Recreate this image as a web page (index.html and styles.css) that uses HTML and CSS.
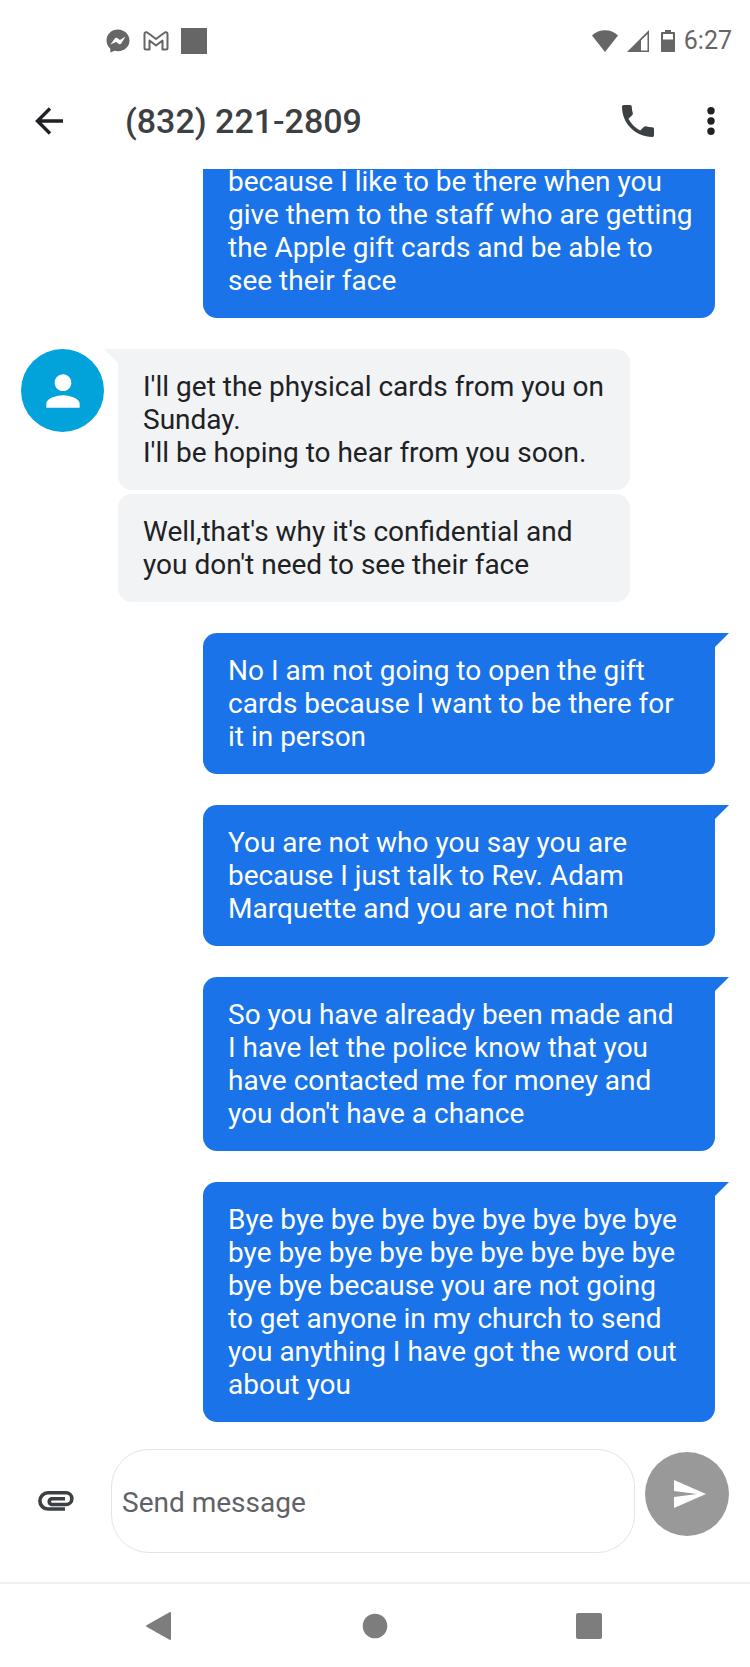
FILE: index.html
```
<!DOCTYPE html>
<html lang="en">
<head>
    <meta charset="UTF-8">
    <meta name="viewport" content="width=device-width, initial-scale=1">
    <title>Messages</title>
    <link rel="stylesheet" href="styles.css">
</head>
<body>
    <div class="status-bar">
        <div class="notifications">
            <svg width="24" height="24" viewBox="0 0 24 24">
                <path fill="#666" d="M12 0.5C5.500.5.500 5.300.500 11.500c0 3.300 1.500 6.100 3.700 8.100L4.500 23.500l4-1.800c1.100.3 2.300.5 3.500.5 6.500 0 11.500-4.700 11.500-10.700S18.500.5 12 .5z"/>
                <path fill="#fff" d="M4.500 15.500l4.300-6c.6-.9 1.500-1 2.300-.4l2.800 2 5.600-3.600-4.300 7c-.6.9-1.500 1-2.300.4l-2.800-2z"/>
            </svg>
            <svg class="gmail" width="26" height="20" viewBox="0 0 26 20">
                <path fill="none" stroke="#666" stroke-width="2" stroke-linejoin="round" d="M1.500 3v14c0 .9.6 1.500 1.500 1.500h3.500V9.500l6.500 5 6.500-5v9H23c.9 0 1.500-.6 1.500-1.500V3c0-2-2-2.200-3.500-1L13 8 5 2C3.500.8 1.500 1 1.500 3z"/>
            </svg>
            <span class="app-square"></span>
        </div>
        <div class="system">
            <svg width="26" height="22" viewBox="0 0 26 22">
                <path fill="#666" d="M13 22L0 5.500C7-1.500 19-1.500 26 5.500z"/>
            </svg>
            <svg class="signal" width="22" height="22" viewBox="0 0 22 22">
                <path fill="#666" fill-rule="evenodd" d="M22 0v22H0zM20.500 4L14 10.500v10h6.500z"/>
            </svg>
            <svg class="battery" width="14" height="22" viewBox="0 0 14 22">
                <path fill="#666" fill-rule="evenodd" d="M4 0h6v2h3c.6 0 1 .4 1 1v18c0 .6-.4 1-1 1H1c-.6 0-1-.4-1-1V3c0-.6.4-1 1-1h3zM2 4v5.500h10V4z"/>
            </svg>
            <time>6:27</time>
        </div>
    </div>

    <header class="header">
        <button class="icon-btn" aria-label="Back">
            <svg width="28" height="28" viewBox="0 0 28 28">
                <path fill="none" stroke="#202124" stroke-width="3.400" d="M15 1.500L2.500 14 15 26.500M2.500 14H28"/>
            </svg>
        </button>
        <h1>(832) 221-2809</h1>
        <button class="icon-btn" aria-label="Call">
            <svg width="32" height="32" viewBox="3 3 18 18">
                <path fill="#3c4043" d="M6.620 10.790c1.440 2.830 3.760 5.140 6.590 6.590l2.200-2.200c.27-.27.67-.36 1.020-.24 1.120.37 2.330.57 3.570.57.55 0 1 .45 1 1V20c0 .55-.45 1-1 1-9.390 0-17-7.610-17-17 0-.55.45-1 1-1h3.500c.55 0 1 .45 1 1 0 1.250.2 2.450.57 3.570.11.35.03.74-.25 1.020l-2.200 2.200z"/>
            </svg>
        </button>
        <button class="icon-btn more" aria-label="More options">
            <svg width="8" height="28" viewBox="0 0 8 28">
                <g fill="#202124">
                    <circle cx="4" cy="3.700" r="3.700"/>
                    <circle cx="4" cy="14" r="3.700"/>
                    <circle cx="4" cy="24.300" r="3.700"/>
                </g>
            </svg>
        </button>
    </header>

    <main class="chat">
        <p class="bubble sent">because I like to be there when you give them to the staff who are getting the Apple gift cards and be able to see their face</p>

        <div class="received-group">
            <div class="avatar">
                <svg width="50" height="50" viewBox="0 0 24 24">
                    <path fill="#fff" d="M12 12c2.210 0 4-1.790 4-4s-1.790-4-4-4-4 1.790-4 4 1.790 4 4 4zm0 2c-2.670 0-8 1.340-8 4v2h16v-2c0-2.660-5.330-4-8-4z"/>
                </svg>
            </div>
            <div class="stack">
                <p class="bubble received tail">I'll get the physical cards from you on Sunday.<br>I'll be hoping to hear from you soon.</p>
                <p class="bubble received">Well,that's why it's confidential and you don't need to see their face</p>
            </div>
        </div>

        <p class="bubble sent tail">No I am not going to open the gift cards because I want to be there for it in person</p>
        <p class="bubble sent tail">You are not who you say you are because I just talk to Rev. Adam Marquette and you are not him</p>
        <p class="bubble sent tail">So you have already been made and<br>I have let the police know that you have contacted me for money and you don't have a chance</p>
        <p class="bubble sent tail">Bye bye bye bye bye bye bye bye bye bye bye bye bye bye bye bye bye bye bye bye because you are not going<br>to get anyone in my church to send you anything I have got the word out about you</p>
    </main>

    <form class="composer">
        <button type="button" class="icon-btn attach" aria-label="Attach">
            <svg width="36" height="20" viewBox="0 0 36 20">
                <path fill="none" stroke="#3c4043" stroke-width="3.600" d="M27 18H10a8 8 0 0 1 0-16.200H28a5.800 5.800 0 0 1 0 11.700H13.500a3 3 0 0 1 0-5.800H27"/>
            </svg>
        </button>
        <input type="text" placeholder="Send message" aria-label="Send message">
        <button type="button" class="send" aria-label="Send">
            <svg width="32" height="28" viewBox="0 0 32 28">
                <path fill="#fff" d="M0 0l32 14L0 28V17l23-3-23-3z"/>
            </svg>
        </button>
    </form>

    <nav class="nav-bar">
        <button class="icon-btn" aria-label="Back">
            <svg width="30" height="28" viewBox="0 0 30 28">
                <path fill="#7d7d7d" stroke="#7d7d7d" stroke-width="2" stroke-linejoin="round" d="M24 1v26L1 14z"/>
            </svg>
        </button>
        <button class="icon-btn" aria-label="Home">
            <svg width="26" height="26" viewBox="0 0 26 26">
                <circle cx="13" cy="13" r="12.300" fill="#7d7d7d"/>
            </svg>
        </button>
        <button class="icon-btn" aria-label="Recent apps">
            <svg width="26" height="26" viewBox="0 0 26 26">
                <rect width="26" height="26" rx="2" fill="#7d7d7d"/>
            </svg>
        </button>
    </nav>
</body>
</html>
```

FILE: styles.css
```
:root {
    --blue: #1a73e8;
    --grey-bubble: #f1f3f4;
    --text: #202124;
    --text-soft: #3c4043;
    --status: #666;
}

* {
    box-sizing: border-box;
}

body {
    margin: 0;
    height: 100vh;
    display: flex;
    flex-direction: column;
    background: #fff;
    color: var(--text);
    font-family: Roboto, "Liberation Sans", sans-serif;
    font-size: 28px;
    line-height: 33px;
}

svg {
    display: block;
}

.icon-btn {
    display: flex;
    align-items: center;
    justify-content: center;
    padding: 0;
    border: 0;
    background: none;
    cursor: pointer;
}

/* status bar */
.status-bar {
    flex: none;
    height: 72px;
    padding: 9px 18px 0 106px;
    display: flex;
    align-items: center;
    justify-content: space-between;
    color: var(--status);
}

.notifications,
.system {
    display: flex;
    align-items: center;
}

.gmail {
    margin: 0 12px 0 13px;
}

.app-square {
    width: 26px;
    height: 26px;
    background: var(--status);
}

.signal {
    margin: 0 12px 0 9px;
}

.system time {
    margin-left: 9px;
    font-size: 25px;
}

/* header */
.header {
    flex: none;
    height: 97px;
    padding: 0 35px;
    display: flex;
    align-items: center;
}

.header h1 {
    flex: 1;
    margin: 0 0 0 62px;
    font-size: 34px;
    font-weight: 500;
    line-height: 40px;
    color: var(--text-soft);
}

.more {
    margin-left: 53px;
}

/* conversation, newest message sits at the bottom */
.chat {
    flex: 1;
    min-height: 0;
    padding: 0 35px 0 21px;
    overflow: hidden;
    display: flex;
    flex-direction: column;
    justify-content: flex-end;
    gap: 31px;
}

.chat > * {
    flex: none;
}

.bubble {
    position: relative;
    width: 100%;
    max-width: 512px;
    margin: 0;
    padding: 21px 20px 21px 25px;
    border-radius: 14px;
}

.sent {
    align-self: flex-end;
    background: var(--blue);
    color: #fff;
}

.received {
    background: var(--grey-bubble);
}

.tail::before {
    content: "";
    position: absolute;
    top: 0;
    border-top: 14px solid var(--blue);
}

.sent.tail {
    border-top-right-radius: 0;
}

.sent.tail::before {
    left: 100%;
    border-right: 14px solid transparent;
}

.received.tail {
    border-top-left-radius: 0;
}

.received.tail::before {
    right: 100%;
    border-top-color: var(--grey-bubble);
    border-left: 14px solid transparent;
}

.received-group {
    display: flex;
    align-items: flex-start;
    gap: 14px;
}

.avatar {
    flex: none;
    width: 83px;
    height: 83px;
    border-radius: 50%;
    background: #02a2db;
    display: flex;
    align-items: center;
    justify-content: center;
}

.stack {
    flex: 1;
    display: flex;
    flex-direction: column;
    gap: 4px;
}

/* composer */
.composer {
    flex: none;
    padding: 27px 21px 29px 38px;
    display: flex;
    align-items: center;
    border-bottom: 2px solid #f0f0f0;
}

.composer input {
    flex: 1;
    min-width: 0;
    height: 104px;
    margin: 0 10px 0 37px;
    padding: 2px 10px 0;
    border: 1px solid #e4e4e4;
    border-radius: 38px;
    background: #fff;
    color: var(--text);
    font: inherit;
    outline: none;
}

.composer input::placeholder {
    color: #5f6368;
    opacity: 1;
}

.send {
    align-self: flex-start;
    width: 84px;
    height: 84px;
    margin-top: 3px;
    padding: 0 0 0 6px;
    border: 0;
    border-radius: 50%;
    background: #999;
    display: flex;
    align-items: center;
    justify-content: center;
    cursor: pointer;
}

/* system navigation */
.nav-bar {
    flex: none;
    height: 83px;
    padding: 0 54px;
    display: grid;
    grid-template-columns: repeat(3, 1fr);
}
```
